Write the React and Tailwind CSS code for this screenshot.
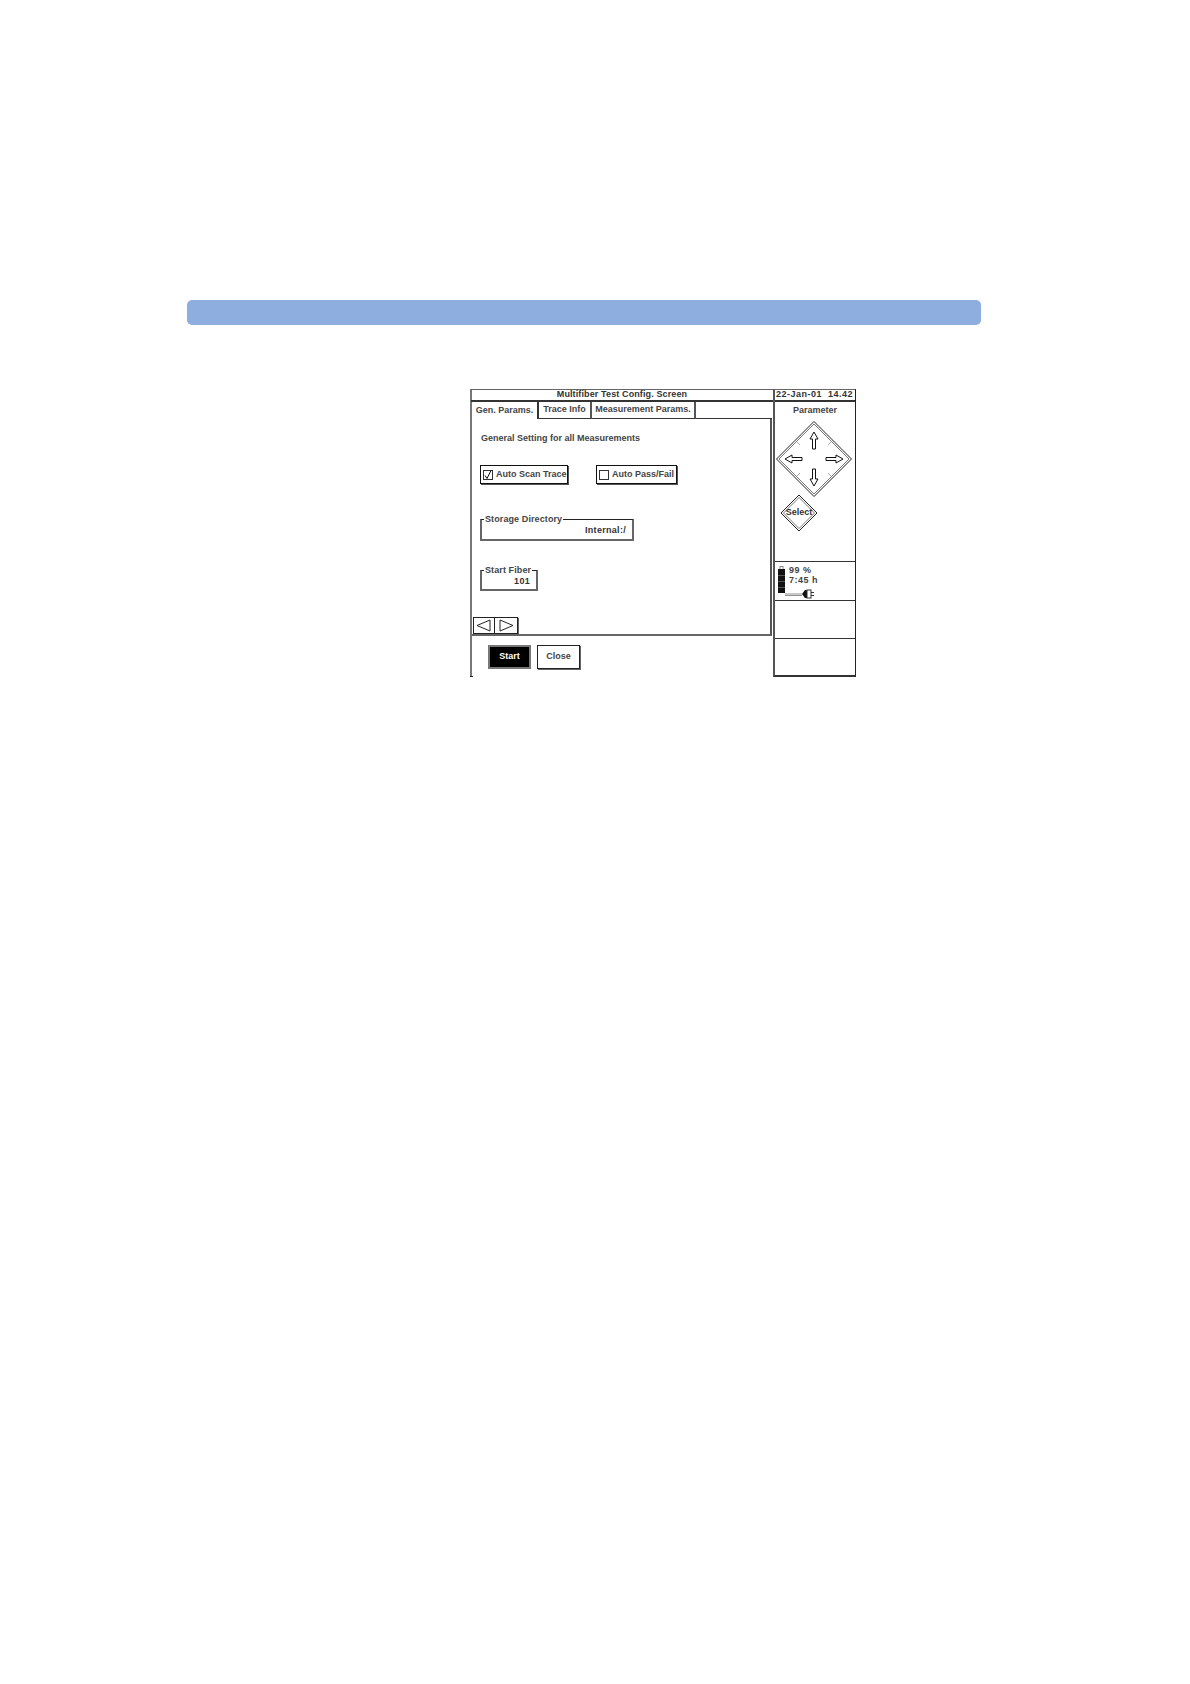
import React from 'react';

const font = "font-['Liberation_Sans',Arial,sans-serif]";

const ArrowIcon = ({ d }) => (
  <path d={d} fill="white" stroke="#111" strokeWidth="1" strokeLinejoin="miter" />
);

const NavPad = () => (
  <svg width="78" height="78" viewBox="0 0 78 78" className="block">
    <path d="M39 1.5 L76.5 39 L39 76.5 L1.5 39 Z" fill="none" stroke="#222" strokeWidth="1" />
    <path d="M39 4 L74 39 L39 74 L4 39 Z" fill="none" stroke="#777" strokeWidth="1" />
    <path d="M20 20 L25 25 M58 20 L53 25 M20 58 L25 53 M58 58 L53 53" stroke="#888" strokeWidth="0.7" />
    <ArrowIcon d="M39 12 L43 19 L40.5 19 L40.5 29 L37.5 29 L37.5 19 L35 19 Z" />
    <ArrowIcon d="M39 66 L43 59 L40.5 59 L40.5 49 L37.5 49 L37.5 59 L35 59 Z" />
    <ArrowIcon d="M10 39 L17 35 L17 37.5 L27 37.5 L27 40.5 L17 40.5 L17 43 Z" />
    <ArrowIcon d="M68 39 L61 35 L61 37.5 L51 37.5 L51 40.5 L61 40.5 L61 43 Z" />
  </svg>
);

const SelectButton = () => (
  <div className="relative w-[38px] h-[38px] -mt-[4px] ml-[5px]">
    <svg width="38" height="38" viewBox="0 0 38 38" className="block">
      <path d="M19 1 L37 19 L19 37 L1 19 Z" fill="none" stroke="#222" strokeWidth="1" />
      <path d="M19 3.5 L34.5 19 L19 34.5 L3.5 19 Z" fill="white" stroke="#777" strokeWidth="1" />
    </svg>
    <span className="absolute inset-0 flex items-center justify-center text-[9px] font-bold text-[#333]">Select</span>
  </div>
);

const Battery = () => (
  <svg width="10" height="28" viewBox="0 0 10 28" className="block shrink-0">
    <rect x="3" y="0.5" width="3" height="3" fill="none" stroke="#888" strokeWidth="1" />
    <rect x="1" y="3" width="7" height="24" fill="#111" />
    <path d="M1 9.5 H8 M1 15.5 H8 M1 21.5 H8" stroke="#999" strokeWidth="0.5" />
  </svg>
);

const Plug = () => (
  <svg width="30" height="10" viewBox="0 0 30 10" className="block">
    <path d="M0 5 H17 M0 6.5 H17" stroke="#777" strokeWidth="0.8" />
    <path d="M17 5 L20 1 H22 V9 H20 Z" fill="#111" />
    <rect x="22" y="1" width="4" height="8" fill="none" stroke="#333" strokeWidth="1" />
    <path d="M26 3.5 H29 M26 6.5 H29" stroke="#333" strokeWidth="1" />
  </svg>
);

const CheckOption = ({ label, checked, width }) => (
  <div className={`${width} h-[19px] flex items-center gap-[3px] pl-[2px] border border-[#111] shadow-[1px_1px_0_#555]`}>
    <span className="w-[10px] h-[10px] shrink-0 border border-[#333] flex items-center justify-center">
      {checked && (
        <svg width="10" height="10" viewBox="0 0 10 10" className="shrink-0">
          <path d="M2 5.5 L4 8.5 L8 0.5" fill="none" stroke="#111" strokeWidth="1" />
        </svg>
      )}
    </span>
    <span className="text-[9px] font-bold text-[#444] whitespace-nowrap">{label}</span>
  </div>
);

const GroupBox = ({ label, value, width, height }) => (
  <fieldset className={`${width} ${height} border-x-2 border-b-2 border-t border-x-[#666] border-b-[#666] border-t-[#222] rounded-[1px]`}>
    <legend className="text-[9px] font-bold tracking-[0.1px] text-[#444] leading-[11px] px-[1px] ml-[2px] whitespace-nowrap">{label}</legend>
    <div className="text-[9px] font-bold tracking-[0.3px] text-[#333] text-right leading-[11px] pr-[6px]">{value}</div>
  </fieldset>
);

const tabs = [
  { label: 'Gen. Params.', width: 'w-[67px]', active: true },
  { label: 'Trace Info', width: 'w-[53px]' },
  { label: 'Measurement Params.', width: 'w-[104px]' },
];

export default function App() {
  return (
    <div className={`${font} bg-white min-h-[1684px] pt-[300px] text-[#222]`}>
      <div className="ml-[187px] w-[794px] h-[25px] bg-[#8eaee0] rounded-[5px]" />

      <div className="ml-[470px] mt-[64px] w-[386px] h-[288px] flex">
        {/* left part of the instrument screen */}
        <div className="w-[303px] flex flex-col border-l-2 border-l-[#777]">
          <div className="h-[13px] border-t border-t-[#666] border-b-2 border-b-[#333] flex items-center justify-center text-[9px] font-bold tracking-[0.12px] text-[#333] -ml-px">
            Multifiber Test Config. Screen
          </div>
          <div className="h-[17px] flex mr-[1px]">
            {tabs.map((tab) => (
              <div
                key={tab.label}
                className={`${tab.width} flex items-center justify-center text-[9px] font-bold text-[#444] whitespace-nowrap ${
                  tab.active ? 'border-r-2 border-r-[#333]' : 'border-r-2 border-r-[#555] border-b border-b-[#333]'
                }`}
              >
                {tab.label}
              </div>
            ))}
            <div className="flex-1 border-b border-b-[#333]" />
          </div>
          <div className="h-[217px] mr-[1px] border-r-2 border-r-[#555] border-b-2 border-b-[#666] flex flex-col pl-[8px]">
            <div className="mt-[14px] ml-[1px] h-[11px] leading-[11px] text-[9px] font-bold text-[#444]">
              General Setting for all Measurements
            </div>
            <div className="mt-[21px] flex gap-[28px]">
              <CheckOption label="Auto Scan Trace" checked width="w-[88px]" />
              <CheckOption label="Auto Pass/Fail" width="w-[81px]" />
            </div>
            <div className="mt-[30px]">
              <GroupBox label="Storage Directory" value="Internal:/" width="w-[154px]" height="h-[27px]" />
            </div>
            <div className="mt-[24px]">
              <GroupBox label="Start Fiber" value="101" width="w-[58px]" height="h-[26px]" />
            </div>
            <div className="mt-auto -ml-[7px] flex">
              <div className="w-[22px] h-[17px] border border-[#222] flex items-center justify-center">
                <svg width="16" height="13" viewBox="0 0 16 13"><path d="M14 1 L1 6.5 L14 12 Z" fill="white" stroke="#222" strokeWidth="1" /></svg>
              </div>
              <div className="w-[23px] h-[17px] border border-l-0 border-[#222] shadow-[1px_1px_0_#666] flex items-center justify-center">
                <svg width="16" height="13" viewBox="0 0 16 13"><path d="M2 1 L15 6.5 L2 12 Z" fill="white" stroke="#222" strokeWidth="1" /></svg>
              </div>
            </div>
          </div>
          <div className="flex-1 flex gap-[6px] pl-[16px] pt-[9px] relative">
            <button className="w-[43px] h-[24px] bg-black border-2 border-[#777] text-white text-[9px] font-bold">Start</button>
            <button className="w-[43px] h-[24px] bg-white border border-[#222] shadow-[1px_1px_0_#666] text-[#444] text-[9px] font-bold">Close</button>
            <span className="absolute left-[-2px] bottom-0 w-[3px] h-px bg-[#222]" />
          </div>
        </div>

        {/* right status column */}
        <div className="flex-1 flex flex-col border-l-2 border-l-[#555] border-r border-r-[#222] border-b-2 border-b-[#333]">
          <div className="h-[13px] border-t border-t-[#666] border-b-2 border-b-[#333] pl-[1px] flex items-center text-[9px] font-bold tracking-[0.5px] text-[#333] whitespace-pre">
            22-Jan-01  14.42
          </div>
          <div className="h-[160px] border-b border-b-[#333] flex flex-col pt-[3px]">
            <div className="text-center text-[9px] font-bold text-[#444] leading-[11px]">Parameter</div>
            <div className="mt-[4px]"><NavPad /></div>
            <SelectButton />
          </div>
          <div className="h-[39px] border-b border-b-[#333] flex pl-[2px] pt-[4px] relative">
            <Battery />
            <div className="ml-[2px] -mt-[1px] text-[9px] font-bold tracking-[0.5px] text-[#444] leading-[10px]">
              <div>99 %</div>
              <div>7:45 h</div>
            </div>
            <div className="absolute left-[10px] bottom-[1px]"><Plug /></div>
          </div>
          <div className="h-[38px] border-b border-b-[#333]" />
          <div className="flex-1" />
        </div>
      </div>
    </div>
  );
}
